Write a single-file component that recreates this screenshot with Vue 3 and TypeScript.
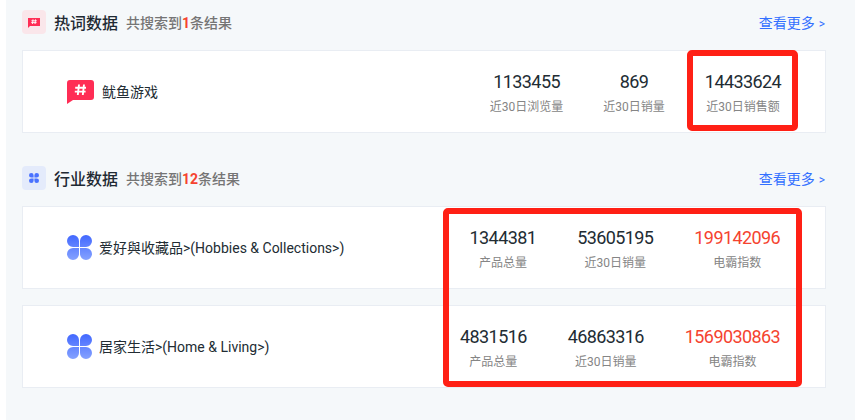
<template>
  <div class="page">
    <div class="content">
      <section v-for="section in sections" :key="section.title" class="section">
        <div class="section-head">
          <span class="head-icon" :class="section.kind">
            <svg v-if="section.kind === 'word'" width="12" height="11" viewBox="0 0 12 11">
              <path d="M0 1h12v8H2L0 11z" fill="#ff2d55" />
              <path d="M5 2.4 4.5 7M7.5 2.4 7 7M3.4 3.8h5.4M3.2 5.6h5.4" stroke="#fff" stroke-width=".9" fill="none" />
            </svg>
            <svg v-else width="10" height="10" viewBox="0 0 10 10">
              <path d="M2.3 0a2.3 2.3 0 0 1 2.3 2.3v2.3H2.3a2.3 2.3 0 0 1 0-4.6zM7.7 0a2.3 2.3 0 0 1 0 4.6H5.4V2.3A2.3 2.3 0 0 1 7.7 0z" fill="#4a72ff" />
              <path d="M2.3 5.4h2.3v2.3a2.3 2.3 0 1 1-2.3-2.3zM5.4 5.4h2.3a2.3 2.3 0 1 1-2.3 2.3z" fill="#4a72ff" />
            </svg>
          </span>
          <h3 class="section-title">{{ section.title }}</h3>
          <span class="section-count">共搜索到<b>{{ section.count }}</b>条结果</span>
          <a class="more">查看更多<i>&gt;</i></a>
        </div>

        <div class="rows">
          <div v-for="row in section.rows" :key="row.name" class="row">
            <div class="row-name" :class="section.kind">
              <svg v-if="section.kind === 'word'" class="bubble" width="27" height="24" viewBox="0 0 27 24">
                <path d="M3 0h21a3 3 0 0 1 3 3v14a3 3 0 0 1-3 3H6l-6 4V3a3 3 0 0 1 3-3z" fill="#ff2d55" />
                <path d="M12 4.5 10.8 15M17 4.5 15.8 15M8.2 7.8h10.8M7.8 11.6h10.8" stroke="#fff" stroke-width="1.9" fill="none" />
              </svg>
              <svg v-else class="clover" width="25" height="25" viewBox="0 0 25 25">
                <defs>
                  <linearGradient id="petal" x1="0" y1="0" x2="0" y2="1">
                    <stop offset="0" stop-color="#4268ff" />
                    <stop offset="1" stop-color="#85a2ff" />
                  </linearGradient>
                </defs>
                <path fill="url(#petal)" d="M6 0a6 6 0 0 1 6 6v6H6A6 6 0 0 1 6 0zM19 0a6 6 0 0 1 0 12h-6V6a6 6 0 0 1 6-6zM6 13h6v6a6 6 0 1 1-6-6zM13 13h6a6 6 0 1 1-6 6z" />
              </svg>
              <span>{{ row.name }}</span>
            </div>
            <div class="stats" :class="section.kind">
              <div v-for="stat in row.stats" :key="stat.label" class="stat">
                <div class="stat-value" :class="{ hot: stat.hot }">{{ stat.value }}</div>
                <div class="stat-label">{{ stat.label }}</div>
              </div>
            </div>
          </div>
        </div>
      </section>
    </div>

    <!-- red annotation boxes drawn over the screenshot -->
    <div class="mark mark-one"></div>
    <div class="mark mark-two"></div>
  </div>
</template>

<script setup lang="ts">
interface Stat {
  value: string
  label: string
  hot?: boolean
}

interface Row {
  name: string
  stats: Stat[]
}

interface Section {
  title: string
  kind: 'word' | 'trade'
  count: number
  rows: Row[]
}

const sections: Section[] = [
  {
    title: '热词数据',
    kind: 'word',
    count: 1,
    rows: [
      {
        name: '鱿鱼游戏',
        stats: [
          { value: '1133455', label: '近30日浏览量' },
          { value: '869', label: '近30日销量' },
          { value: '14433624', label: '近30日销售额' }
        ]
      }
    ]
  },
  {
    title: '行业数据',
    kind: 'trade',
    count: 12,
    rows: [
      {
        name: '爱好與收藏品>(Hobbies & Collections>)',
        stats: [
          { value: '1344381', label: '产品总量' },
          { value: '53605195', label: '近30日销量' },
          { value: '199142096', label: '电霸指数', hot: true }
        ]
      },
      {
        name: '居家生活>(Home & Living>)',
        stats: [
          { value: '4831516', label: '产品总量' },
          { value: '46863316', label: '近30日销量' },
          { value: '1569030863', label: '电霸指数', hot: true }
        ]
      }
    ]
  }
]
</script>

<style>
html,
body {
  background: #fff;
}
</style>

<style scoped>
.page {
  position: relative;
  width: 855px;
  height: 420px;
  padding-left: 6px;
  box-sizing: border-box;
  overflow: hidden;
  font-family: Roboto, "Noto Sans CJK SC", sans-serif;
}

.content {
  height: 100%;
  padding: 10px 29px 0 16px;
  box-sizing: border-box;
  background: #f5f8fa;
}

.section {
  margin-bottom: 33px;
}

.section-head {
  display: flex;
  align-items: center;
  height: 24px;
  margin-bottom: 16px;
}

.head-icon {
  display: flex;
  align-items: center;
  justify-content: center;
  width: 24px;
  height: 24px;
  border-radius: 4px;
  margin-right: 8px;
}

.head-icon.word {
  background: #fae6ea;
}

.head-icon.trade {
  background: #e4ebfb;
}

.section-title {
  margin: 0 8px 0 0;
  font-size: 16px;
  font-weight: 500;
  color: #1f2a33;
}

.section-count {
  font-size: 14px;
  font-weight: 500;
  color: #757575;
}

.section-count b {
  color: #f5432f;
  font-weight: 700;
}

.more {
  margin-left: auto;
  margin-right: 1px;
  font-size: 14px;
  color: #3370ff;
}

.more i {
  font-style: normal;
  font-size: 12px;
  margin-left: 4px;
}

.rows {
  display: flex;
  flex-direction: column;
  gap: 16px;
}

.row {
  display: flex;
  align-items: flex-start;
  justify-content: space-between;
  height: 83px;
  box-sizing: border-box;
  background: #fff;
  border: 1px solid #e9edf3;
}

.row-name {
  display: flex;
  align-items: center;
  padding-left: 44px;
  height: 81px;
  font-size: 14px;
  color: #222c33;
}

.row-name span {
  margin-bottom: 2px;
}

.row-name.word span {
  margin-left: 8px;
}

.row-name.trade span {
  margin-left: 7px;
}

.bubble,
.clover {
  flex: none;
}

.stats {
  display: flex;
  gap: 41px;
  padding: 20px 45px 0 0;
}

.stats.word {
  gap: 40px;
  padding-right: 44px;
}

.stat {
  display: flex;
  flex-direction: column;
  align-items: center;
}

.stat-value {
  font-size: 18px;
  line-height: 22px;
  font-weight: 400;
  letter-spacing: -0.6px;
  color: #222c33;
}

.stat-value.hot {
  color: #f5432f;
}

.stat-label {
  margin-top: 5px;
  font-size: 12px;
  line-height: 18px;
  color: #858585;
}

.mark {
  position: absolute;
  box-sizing: border-box;
  border: 6px solid #ff2015;
  border-radius: 5px;
}

.mark-one {
  left: 687px;
  top: 50px;
  width: 111px;
  height: 81px;
}

.mark-two {
  left: 443px;
  top: 208px;
  width: 359px;
  height: 179px;
}
</style>
